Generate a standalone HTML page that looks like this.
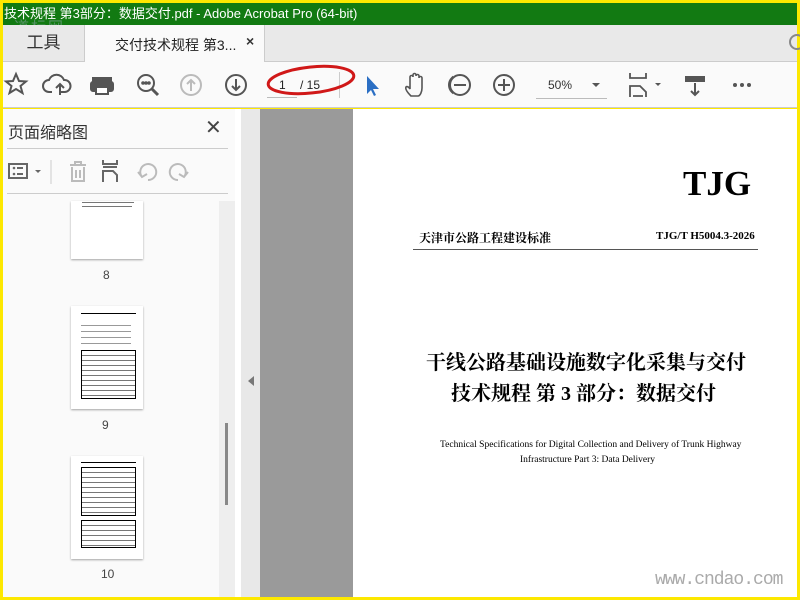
<!DOCTYPE html>
<html><head><meta charset="utf-8"><style>
*{margin:0;padding:0;box-sizing:border-box}
body{width:800px;height:600px;position:relative;overflow:hidden;background:#fde800;font-family:"Liberation Sans","Noto Sans CJK SC",sans-serif}
.a{position:absolute}
.thumb{position:absolute;background:#fff;box-shadow:0 1px 2px rgba(0,0,0,.35)}
.ser{font-family:"Liberation Serif","Noto Serif CJK SC",serif;color:#000}
</style></head><body>
<div class="a" style="left:3px;top:3px;width:794px;height:22px;background:#127a12;color:#fff;font-size:13px;line-height:21px;padding-left:1px">技术规程 第3部分：数据交付.pdf - Adobe Acrobat Pro (64-bit)</div>
<div class="a" style="left:14px;top:16px;color:#9ab;opacity:.5;font-size:15px;letter-spacing:2px">道标网</div>
<div class="a" style="left:3px;top:25px;width:794px;height:37px;background:#e9e9e9;border-bottom:1px solid #ccc"></div>
<div class="a" style="left:3px;top:25px;width:81px;height:36px;font-size:17px;color:#333;text-align:center;line-height:36px">工具</div>
<div class="a" style="left:84px;top:25px;width:181px;height:37px;background:#fafafa;border-left:1px solid #ccc;border-right:1px solid #ccc"></div>
<div class="a" style="left:115px;top:35px;font-size:14px;color:#222">交付技术规程 第3...</div>
<div class="a" style="left:246px;top:33px;font-size:14px;color:#333;font-weight:bold">×</div>
<div class="a" style="left:789px;top:34px;width:16px;height:16px;border:2px solid #888;border-radius:50%"></div>
<div class="a" style="left:3px;top:62px;width:794px;height:46px;background:#fafafa;border-bottom:1px solid #ccc"></div>
<svg class="a" style="left:3px;top:70px" width="450" height="32" fill="none" stroke="#555" stroke-width="2">
<path d="M13 4 l3 7 7 .5 -5.5 4.5 2 7 -6.5-4 -6.5 4 2-7 -5.5-4.5 7-.5z"/>
<path d="M49 22 h-3 a6 6 0 0 1 0-12 a8 8 0 0 1 15 0 a6 6 0 0 1 1 12 h-4 M57 25 v-10 M53 18 l4-4 4 4"/>
<rect x="90" y="8" width="18" height="5" fill="#555"/><rect x="88" y="12" width="22" height="9" fill="#555" rx="2"/><rect x="93" y="17" width="12" height="7" fill="#fff"/>
<circle cx="143" cy="13" r="8"/><path d="M149 19 l6 6" stroke-width="3"/><circle cx="140" cy="13" r=".8" fill="#555"/><circle cx="143" cy="13" r=".8" fill="#555"/><circle cx="146" cy="13" r=".8" fill="#555"/>
<circle cx="188" cy="15" r="10" stroke="#bbb"/><path d="M188 21 v-11 M184 14 l4-4 4 4" stroke="#bbb"/>
<circle cx="233" cy="15" r="10"/><path d="M233 9 v11 M229 16 l4 4 4-4"/>
<path d="M364 6 v18 l4-4 3 6 2-1 -3-6 6 0z" fill="#2b6fc4" stroke="none"/>
<path d="M408 26 c-3-3-6-7-5-9 1-1 3 0 4 2 v-12 a1.5 1.5 0 0 1 3 0 v-2 a1.5 1.5 0 0 1 3 0 v1 a1.5 1.5 0 0 1 3 0 v2 a1.5 1.5 0 0 1 3 0 v10 c0 4-2 8-4 8z" stroke-width="1.6"/>
<circle cx="456" cy="15" r="10"/>
</svg>
<div class="a" style="left:279px;top:78px;font-size:12px;color:#222">1</div>
<div class="a" style="left:267px;top:97px;width:30px;height:1px;background:#bbb"></div>
<div class="a" style="left:300px;top:78px;font-size:12px;color:#222">/ 15</div>
<div class="a" style="left:339px;top:72px;width:1px;height:26px;background:#ccc"></div>
<svg class="a" style="left:266px;top:60px" width="95" height="40"><ellipse cx="45" cy="20" rx="43" ry="13" fill="none" stroke="#d01818" stroke-width="3" transform="rotate(-6 45 20)"/></svg>
<svg class="a" style="left:440px;top:70px" width="360" height="32" fill="none" stroke="#555" stroke-width="2">
<circle cx="20" cy="15" r="10"/><path d="M14 15 h12"/>
<circle cx="64" cy="15" r="10"/><path d="M58 15 h12 M64 9 v12"/>
<path d="M152 13 l4 4 4-4z" fill="#555" stroke="none"/>
<path d="M190 3 v5 h16 v-5 M190 27 v-11 h10 l6 6 v5 M193 26 h10" stroke-width="1.8"/><path d="M215 13 l3 3 3-3z" fill="#555" stroke="none"/>
<rect x="245" y="6" width="20" height="6" fill="#555" stroke="none"/><path d="M255 13 v12 M251 21 l4 4 4-4"/>
<circle cx="295" cy="15" r="2" fill="#555" stroke="none"/><circle cx="302" cy="15" r="2" fill="#555" stroke="none"/><circle cx="309" cy="15" r="2" fill="#555" stroke="none"/>
</svg>
<div class="a" style="left:548px;top:78px;font-size:12px;color:#333">50%</div>
<div class="a" style="left:536px;top:98px;width:71px;height:1px;background:#bbb"></div>
<div class="a" style="left:3px;top:109px;width:232px;height:488px;background:#fafafa"></div>
<div class="a" style="left:8px;top:119px;font-size:16px;color:#333">页面缩略图</div>
<div class="a" style="left:205px;top:115px;font-size:20px;color:#444">✕</div>
<div class="a" style="left:7px;top:148px;width:221px;height:1px;background:#ccc"></div>
<div class="a" style="left:7px;top:193px;width:221px;height:1px;background:#ccc"></div>
<svg class="a" style="left:5px;top:156px" width="200" height="30" fill="none" stroke="#666" stroke-width="2">
<rect x="4" y="8" width="18" height="14"/><circle cx="9" cy="12" r="1.3" fill="#666" stroke="none"/><circle cx="9" cy="18" r="1.3" fill="#666" stroke="none"/><path d="M12 12 h6 M12 18 h6"/><path d="M30 14 l3 3 3-3z" fill="#666" stroke="none"/>
<path d="M46 4 v24" stroke="#ccc" stroke-width="1"/>
<path d="M65 9 h16 M70 9 v-3 h6 v3 M67 11 v14 h12 v-14 M71 14 v8 M75 14 v8" stroke="#bbb"/>
<path d="M98 4 v4 h14 v-4 M98 11 h14 M98 26 v-11 h10 l4 4 v7" stroke="#666"/>
<path d="M137 21 a8 8 0 1 1 6 3 M133 16 l4 5 5-3" stroke="#bbb"/>
<path d="M179 21 a8 8 0 1 0 -6 3 M183 16 l-4 5 -5-3" stroke="#bbb"/>
</svg>
<div class="a" style="left:219px;top:201px;width:16px;height:396px;background:#eee"></div>
<div class="a" style="left:225px;top:423px;width:3px;height:82px;background:#888"></div>
<div class="thumb" style="left:71px;top:201px;width:72px;height:58px"></div>
<div class="a" style="left:82px;top:202px;width:52px;height:1px;background:#777"></div>
<div class="a" style="left:82px;top:206px;width:50px;height:1px;background:#777"></div>
<div class="a" style="left:103px;top:268px;font-size:12px;color:#444">8</div>
<div class="thumb" style="left:71px;top:306px;width:72px;height:103px"></div>
<div class="a" style="left:81px;top:313px;width:55px;height:1px;background:#000"></div>
<div class="a" style="left:81px;top:320px;width:50px;height:28px;background:repeating-linear-gradient(#fff 0 5px,#999 5px 6px)"></div>
<div class="a" style="left:81px;top:350px;width:55px;height:49px;border:1px solid #000;background:repeating-linear-gradient(#fff 0 4px,#777 4px 5px)"></div>
<div class="a" style="left:102px;top:418px;font-size:12px;color:#444">9</div>
<div class="thumb" style="left:71px;top:456px;width:72px;height:103px"></div>
<div class="a" style="left:81px;top:462px;width:55px;height:1px;background:#000"></div>
<div class="a" style="left:81px;top:467px;width:55px;height:49px;border:1px solid #000;background:repeating-linear-gradient(#fff 0 4px,#777 4px 5px)"></div>
<div class="a" style="left:81px;top:520px;width:55px;height:28px;border:1px solid #000;background:repeating-linear-gradient(#fff 0 4px,#777 4px 5px)"></div>
<div class="a" style="left:101px;top:567px;font-size:12px;color:#444">10</div>
<div class="a" style="left:235px;top:109px;width:6px;height:488px;background:#fff"></div>
<div class="a" style="left:241px;top:109px;width:19px;height:488px;background:#e8e8e8"></div>
<div class="a" style="left:248px;top:376px;width:0;height:0;border-top:5px solid transparent;border-bottom:5px solid transparent;border-right:6px solid #777"></div>
<div class="a" style="left:260px;top:109px;width:93px;height:488px;background:#9a9a9a"></div>
<div class="a" style="left:353px;top:109px;width:444px;height:488px;background:#fff"></div>
<div class="a ser" style="left:683px;top:164px;font-size:35px;font-weight:bold">TJG</div>
<div class="a ser" style="left:419px;top:229px;font-size:12px;font-weight:bold">天津市公路工程建设标准</div>
<div class="a ser" style="left:656px;top:230px;font-size:11px;font-weight:bold">TJG/T H5004.3-2026</div>
<div class="a" style="left:413px;top:249px;width:345px;height:1px;background:#555"></div>
<div class="a ser" style="left:426px;top:346px;font-size:20px;font-weight:bold">干线公路基础设施数字化采集与交付</div>
<div class="a ser" style="left:451px;top:377px;font-size:20px;font-weight:bold">技术规程 第 3 部分：数据交付</div>
<div class="a ser" style="left:440px;top:440px;font-size:9.5px">Technical Specifications for Digital Collection and Delivery of Trunk Highway</div>
<div class="a ser" style="left:520px;top:455px;font-size:9.5px">Infrastructure Part 3: Data Delivery</div>
<div class="a" style="left:655px;top:570px;font-family:'Liberation Mono',monospace;font-size:18px;color:#aaa;letter-spacing:-1px">www.cndao.com</div>
</body></html>
